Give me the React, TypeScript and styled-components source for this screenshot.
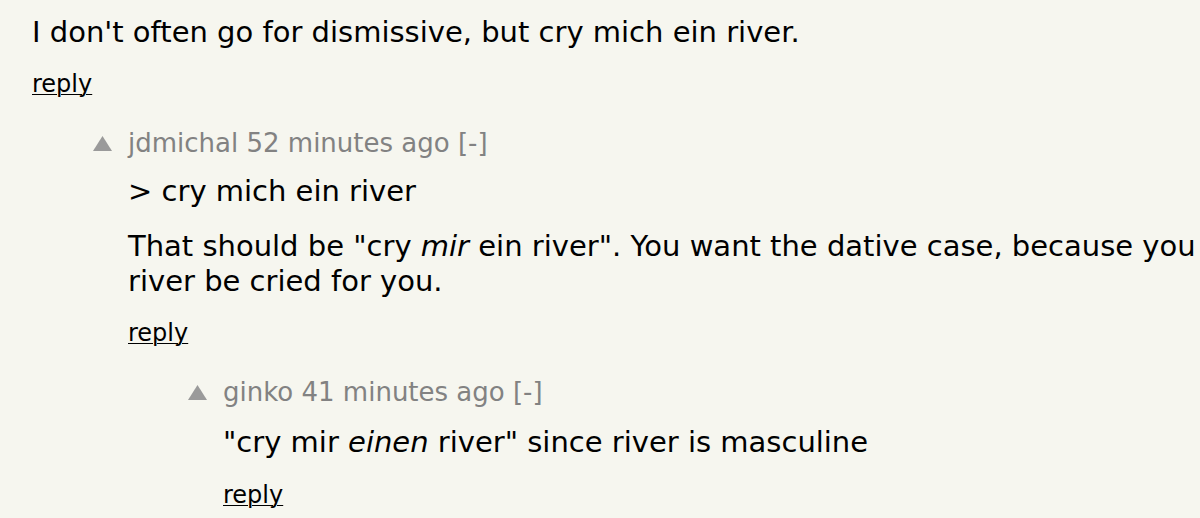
import React from "react";
import styled, { createGlobalStyle } from "styled-components";

const Global = createGlobalStyle`
  html, body {
    margin: 0;
    padding: 0;
    background: #f6f6ef;
    overflow: hidden;
  }
  body {
    font-family: "DejaVu Sans", Verdana, sans-serif;
  }
`;

const Page = styled.div`
  width: 1200px;
  height: 518px;
  overflow: hidden;
  background: #f6f6ef;
  padding-top: 15px;
  box-sizing: border-box;
`;

const Row = styled.div<{ $indent: number }>`
  display: flex;
  align-items: flex-start;
  padding-left: ${(p) => p.$indent}px;
  margin-bottom: 28px;
`;

const Vote = styled.div`
  flex: 0 0 35px;
  width: 35px;
  padding-top: 9px;
  display: flex;
`;

const Body = styled.div`
  flex: 0 0 auto;
  display: flex;
  flex-direction: column;
`;

const Meta = styled.div<{ $gap: number }>`
  font-size: 26px;
  line-height: 32px;
  color: #828282;
  white-space: nowrap;
  margin-bottom: ${(p) => p.$gap}px;
`;

const Text = styled.div`
  font-size: 29px;
  line-height: 35px;
  color: #000;
  white-space: nowrap;
`;

const Para = styled.p`
  margin: 0;
  & + & {
    margin-top: 20px;
  }
`;

const Reply = styled.a<{ $gap: number }>`
  display: block;
  margin-top: ${(p) => p.$gap}px;
  font-size: 24px;
  line-height: 30px;
  color: #000;
  text-decoration: underline;
  text-decoration-thickness: 1px;
  text-underline-offset: 2px;
  width: max-content;
`;

const Arrow = () => (
  <svg width="19" height="15" viewBox="0 0 19 15" aria-hidden="true">
    <polygon points="9.5,0 19,15 0,15" fill="#9a9a9a" />
  </svg>
);

type CommentProps = {
  indent: number;
  meta?: string;
  vote?: boolean;
  metaGap?: number;
  replyGap?: number;
  children: React.ReactNode;
};

const Comment = ({ indent, meta, vote, metaGap = 14.5, replyGap = 19, children }: CommentProps) => (
  <Row $indent={indent}>
    {vote && (
      <Vote>
        <Arrow />
      </Vote>
    )}
    <Body>
      {meta && <Meta $gap={metaGap}>{meta}</Meta>}
      <Text>{children}</Text>
      <Reply href="#" $gap={replyGap}>
        reply
      </Reply>
    </Body>
  </Row>
);

export default function App() {
  return (
    <>
      <Global />
      <Page>
        <Comment indent={32}>
          <Para>I don't often go for dismissive, but cry mich ein river.</Para>
        </Comment>
        <Comment indent={93} vote meta="jdmichal 52 minutes ago [-]">
          <Para>&gt; cry mich ein river</Para>
          <Para>
            That should be "cry <i>mir</i> ein river". You want the dative case, because you
            <br />
            river be cried for you.
          </Para>
        </Comment>
        <Comment indent={188} vote meta="ginko 41 minutes ago [-]" metaGap={17.5} replyGap={20}>
          <Para>
            "cry mir <i>einen</i> river" since river is masculine
          </Para>
        </Comment>
      </Page>
    </>
  );
}
